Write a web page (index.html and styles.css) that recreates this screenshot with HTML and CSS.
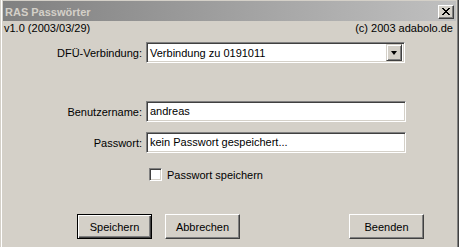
FILE: index.html
```html
<!DOCTYPE html>
<html lang="de">
<head>
  <meta charset="UTF-8">
  <title>RAS Passwörter</title>
  <link rel="stylesheet" href="styles.css">
</head>
<body>
  <div class="window">
    <div class="titlebar">
      <span class="title">RAS Passwörter</span>
      <span class="close-btn">
        <svg width="8" height="7" viewBox="0 0 8 7" shape-rendering="crispEdges">
          <path d="M0 0h2v1h-2zM6 0h2v1h-2zM1 1h2v1h-2zM5 1h2v1h-2zM2 2h4v1h-4zM3 3h2v1h-2zM2 4h4v1h-4zM1 5h2v1h-2zM5 5h2v1h-2zM0 6h2v1h-2zM6 6h2v1h-2z" fill="#000"/>
        </svg>
      </span>
    </div>

    <div class="info">
      <span>v1.0 (2003/03/29)</span>
      <span>(c) 2003 adabolo.de</span>
    </div>

    <div class="row row-combo">
      <label class="label">DFÜ-Verbindung:</label>
      <div class="combo">
        <span class="combo-text">Verbindung zu 0191011</span>
        <span class="combo-btn"><span class="arrow"></span></span>
      </div>
    </div>

    <div class="row row-user">
      <label class="label">Benutzername:</label>
      <div class="field">andreas</div>
    </div>

    <div class="row row-pass">
      <label class="label">Passwort:</label>
      <div class="field">kein Passwort gespeichert...</div>
    </div>

    <div class="check-row">
      <span class="checkbox"></span>
      <span>Passwort speichern</span>
    </div>

    <div class="buttons">
      <div class="btn btn-default"><span>Speichern</span></div>
      <div class="btn btn-cancel"><span>Abbrechen</span></div>
      <div class="btn btn-exit"><span>Beenden</span></div>
    </div>
  </div>
</body>
</html>
```

FILE: styles.css
```css
:root {
  --face: #d4d0c8;
  --shadow: #808080;
  --dark: #404040;
  --light: #ffffff;
}

* {
  margin: 0;
  padding: 0;
  box-sizing: border-box;
}

body {
  background-color: var(--face);
  font-family: 'Liberation Sans', Arial, sans-serif;
  font-size: 11px;
  color: #000;
  overflow: hidden;
}

.window {
  width: 459px;
  height: 247px;
  border-left: 1px solid var(--face);
  border-right: 1px solid var(--dark);
  box-shadow: inset 1px 0 var(--light), inset -1px 0 var(--shadow);
  padding: 1px 2px 0 2px;
}

.titlebar {
  height: 20px;
  display: flex;
  align-items: center;
  justify-content: space-between;
  padding: 0 2px 0 2px;
  background: linear-gradient(to right, #808080, #c0c0c0);
}

.title {
  color: var(--face);
  font-weight: bold;
  font-size: 11px;
  padding-top: 1px;
}

.close-btn {
  width: 16px;
  height: 14px;
  display: flex;
  align-items: center;
  justify-content: center;
  background-color: var(--face);
  border: 1px solid;
  border-color: var(--light) var(--dark) var(--dark) var(--light);
  box-shadow: inset -1px -1px var(--shadow);
  margin-top: 1px;
}

.info {
  display: flex;
  justify-content: space-between;
  height: 13px;
  line-height: 13px;
  margin-top: 1px;
  padding: 0 3px 0 1px;
}

.row {
  display: flex;
  align-items: center;
}

.label {
  width: 139px;
  text-align: right;
  margin-right: 4px;
}

.row-combo {
  margin-top: 7px;
}

.row-user {
  margin-top: 38px;
}

.row-pass {
  margin-top: 10px;
}

.combo,
.field {
  height: 21px;
  background-color: #fff;
  border: 1px solid;
  border-color: var(--shadow) var(--light) var(--light) var(--shadow);
  box-shadow: inset 1px 1px var(--dark), inset -1px -1px var(--face);
}

.combo {
  width: 259px;
  display: flex;
  align-items: center;
  justify-content: space-between;
  padding: 2px;
}

.combo-text {
  padding-left: 1px;
}

.combo-btn {
  width: 16px;
  height: 17px;
  display: flex;
  align-items: center;
  justify-content: center;
  background-color: var(--face);
  border: 1px solid;
  border-color: var(--face) var(--dark) var(--dark) var(--face);
  box-shadow: inset 1px 1px var(--light), inset -1px -1px var(--shadow);
}

.arrow {
  width: 0;
  height: 0;
  border-left: 3.5px solid transparent;
  border-right: 3.5px solid transparent;
  border-top: 4px solid #000;
}

.field {
  width: 260px;
  line-height: 19px;
  padding-left: 3px;
}

.check-row {
  display: flex;
  align-items: center;
  gap: 5px;
  margin-top: 15px;
  padding-left: 146px;
}

.checkbox {
  width: 13px;
  height: 13px;
  background-color: #fff;
  border: 1px solid;
  border-color: var(--shadow) var(--light) var(--light) var(--shadow);
  box-shadow: inset 1px 1px var(--dark), inset -1px -1px var(--face);
}

.buttons {
  display: flex;
  margin-top: 33px;
  padding-left: 74px;
}

.btn {
  width: 75px;
  height: 25px;
  display: flex;
  align-items: center;
  justify-content: center;
  border: 1px solid;
  border-color: var(--light) var(--dark) var(--dark) var(--light);
  box-shadow: inset -1px -1px var(--shadow);
}

.btn-default {
  border: 1px solid #000;
  box-shadow: inset 1px 1px var(--light), inset -1px -1px var(--dark), inset -2px -2px var(--shadow);
}

.btn-cancel {
  margin-left: 13px;
}

.btn-exit {
  margin-left: 109px;
}
```
